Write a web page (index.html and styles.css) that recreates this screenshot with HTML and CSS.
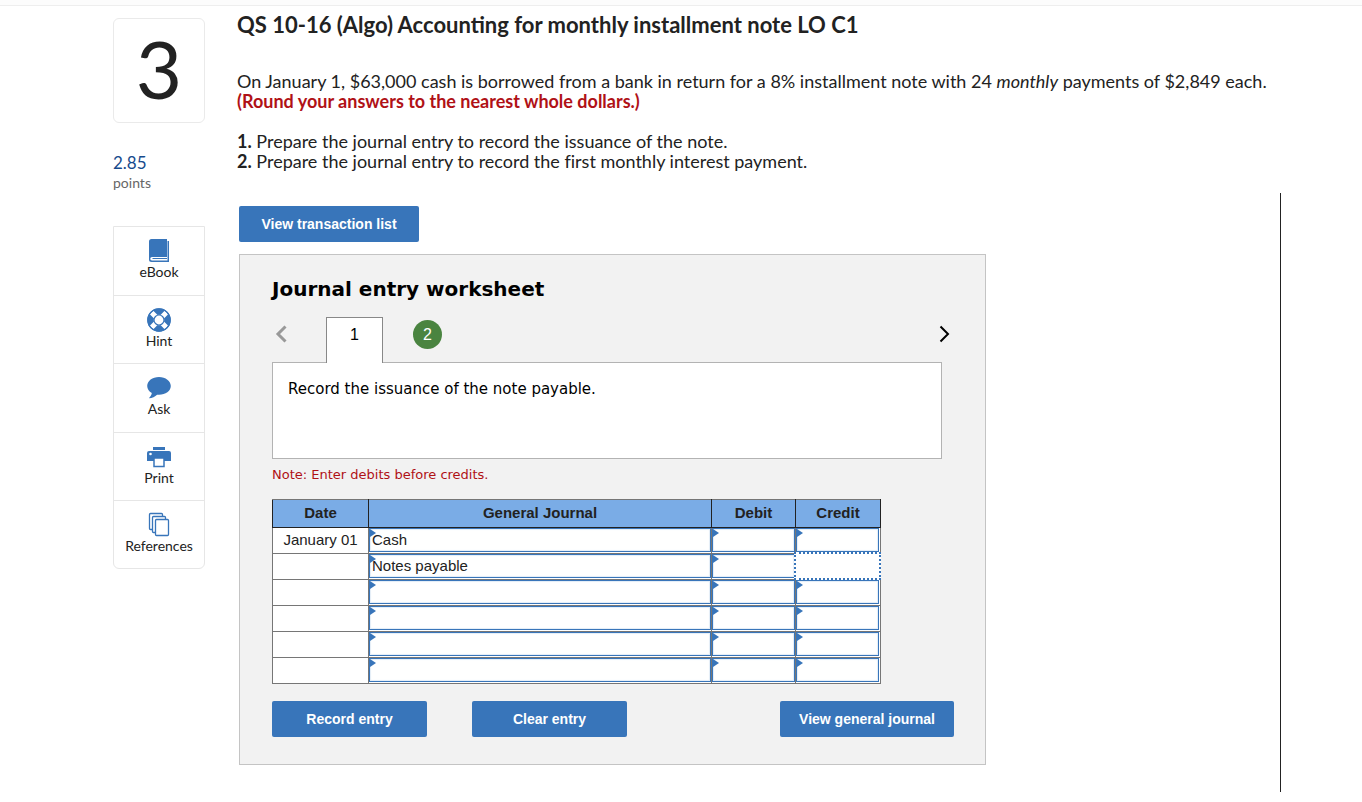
FILE: index.html
```html
<!DOCTYPE html>
<html lang="en">
<head>
  <meta charset="UTF-8" />
  <title>QS 10-16 (Algo) Accounting for monthly installment note</title>
  <link rel="stylesheet" href="styles.css">
</head>
<body>
  <div class="topbar"></div>
  <div class="page">
    <aside class="sidebar">
      <div class="question-number">3</div>
      <div class="points"><span class="points-value">2.85</span>points</div>
      <nav class="tools">
        <a href="#" class="tool">
          <svg width="24" height="26" viewBox="0 0 24 26">
            <path fill="#3875ba" d="M4.500 1H20v18H5a1.500 1.500 0 0 0 0 3.500h15.500V3H22v21H4.500A2.500 2.500 0 0 1 2 21.500v-18A2.500 2.500 0 0 1 4.500 1z"/>
            <path stroke="#3875ba" d="M5.500 20.500H20"/>
          </svg>
          eBook
        </a>
        <a href="#" class="tool">
          <svg width="24" height="26" viewBox="0 0 24 26">
            <circle cx="12" cy="13" r="8.500" fill="none" stroke="#3875ba" stroke-width="6.500"/>
            <path stroke="#fff" stroke-width="5" d="M4.600 5.600l4.400 4.400M19.400 5.600l-4.400 4.400M4.600 20.400l4.400-4.400M19.400 20.400l-4.400-4.400"/>
            <circle cx="12" cy="13" r="11.200" fill="none" stroke="#3875ba" stroke-width="1.200"/>
            <circle cx="12" cy="13" r="5" fill="#fff" stroke="#3875ba" stroke-width="1.200"/>
          </svg>
          Hint
        </a>
        <a href="#" class="tool">
          <svg width="24" height="26" viewBox="0 0 24 26">
            <path fill="#3875ba" d="M12 2C5.400 2 .2 5.900 .2 11c0 2.900 1.800 5.400 4.600 7-.3 2-1.300 3.700-3 5.200 3.500-.2 6.300-1.500 8.300-3.500l1.900.1c6.600 0 11.800-3.900 11.800-8.800S18.600 2 12 2z"/>
          </svg>
          Ask
        </a>
        <a href="#" class="tool">
          <svg width="24" height="26" viewBox="0 0 24 26">
            <path fill="#3875ba" d="M6 3h12v3H6zM2 7h20q2 0 2 2v8H0V9q0-2 2-2z"/>
            <circle cx="3.500" cy="10" r="1.300" fill="#fff"/>
            <path fill="#fff" stroke="#3875ba" stroke-width="1.500" d="M7 14h10v8.500H7z"/>
          </svg>
          Print
        </a>
        <a href="#" class="tool">
          <svg width="24" height="26" viewBox="0 0 24 26">
            <g fill="#fff" stroke="#3875ba" stroke-width="1.300">
              <rect x="2.500" y="1.500" width="13" height="16" rx="1"/>
              <rect x="5.500" y="4.500" width="13" height="16" rx="1"/>
              <rect x="8.500" y="7.500" width="13" height="16" rx="1"/>
            </g>
          </svg>
          References
        </a>
      </nav>
    </aside>

    <main class="content">
      <h1>QS 10-16 (Algo) Accounting for monthly installment note LO C1</h1>
      <div class="question">
        <p>On January 1, $63,000 cash is borrowed from a bank in return for a 8% installment note with 24 <em>monthly</em> payments of $2,849 each. <strong class="round">(Round your answers to the nearest whole dollars.)</strong></p>
        <p><b>1.</b> Prepare the journal entry to record the issuance of the note.<br>
        <b>2.</b> Prepare the journal entry to record the first monthly interest payment.</p>
      </div>

      <div class="answer">
        <button type="button" class="btn btn-list">View transaction list</button>

        <section class="worksheet">
          <h2>Journal entry worksheet</h2>
          <div class="tabs">
            <button type="button" class="arrow prev" aria-label="Previous">
              <svg width="12" height="18" viewBox="0 0 12 18"><path d="M10.500 1.500 3 9l7.500 7.500"/></svg>
            </button>
            <button type="button" class="tab active">1</button>
            <button type="button" class="tab"><span class="dot">2</span></button>
            <button type="button" class="arrow next" aria-label="Next">
              <svg width="12" height="18" viewBox="0 0 12 18"><path d="M1.500 1.500 9 9l-7.500 7.500"/></svg>
            </button>
          </div>
          <div class="instruction">Record the issuance of the note payable.</div>
          <p class="note">Note: Enter debits before credits.</p>

          <table class="journal">
            <colgroup><col class="col-date"><col class="col-general"><col class="col-debit"><col class="col-credit"></colgroup>
            <thead>
              <tr><th>Date</th><th>General Journal</th><th>Debit</th><th>Credit</th></tr>
            </thead>
            <tbody>
              <tr>
                <td>January 01</td>
                <td class="entry"><input type="text" value="Cash" aria-label="Account 1"></td>
                <td class="entry"><input type="text" aria-label="Debit 1"></td>
                <td class="entry"><input type="text" aria-label="Credit 1"></td>
              </tr>
              <tr>
                <td></td>
                <td class="entry"><input type="text" value="Notes payable" aria-label="Account 2"></td>
                <td class="entry"><input type="text" aria-label="Debit 2"></td>
                <td class="entry selected"><input type="text" aria-label="Credit 2"></td>
              </tr>
              <tr>
                <td></td>
                <td class="entry"><input type="text" aria-label="Account 3"></td>
                <td class="entry"><input type="text" aria-label="Debit 3"></td>
                <td class="entry"><input type="text" aria-label="Credit 3"></td>
              </tr>
              <tr>
                <td></td>
                <td class="entry"><input type="text" aria-label="Account 4"></td>
                <td class="entry"><input type="text" aria-label="Debit 4"></td>
                <td class="entry"><input type="text" aria-label="Credit 4"></td>
              </tr>
              <tr>
                <td></td>
                <td class="entry"><input type="text" aria-label="Account 5"></td>
                <td class="entry"><input type="text" aria-label="Debit 5"></td>
                <td class="entry"><input type="text" aria-label="Credit 5"></td>
              </tr>
              <tr>
                <td></td>
                <td class="entry"><input type="text" aria-label="Account 6"></td>
                <td class="entry"><input type="text" aria-label="Debit 6"></td>
                <td class="entry"><input type="text" aria-label="Credit 6"></td>
              </tr>
            </tbody>
          </table>

          <div class="actions">
            <button type="button" class="btn">Record entry</button>
            <button type="button" class="btn">Clear entry</button>
            <button type="button" class="btn btn-journal">View general journal</button>
          </div>
        </section>
      </div>
    </main>
  </div>
</body>
</html>
```
FILE: styles.css
```css
* {
  box-sizing: border-box;
}

body {
  margin: 0;
  background: #fff;
  color: #222;
  font-family: Lato, "Open Sans", sans-serif;
  font-size: 18px;
  line-height: 20px;
}

button, input {
  font-family: "Liberation Sans", Arial, sans-serif;
}

.topbar {
  height: 6px;
  background: #fcfcfc;
  border-bottom: 1px solid #eee;
}

.page {
  display: flex;
  gap: 32px;
  padding: 0 81px 10px 113px;
}

/* left column */
.sidebar {
  flex: 0 0 92px;
  padding-top: 12px;
}

.question-number {
  height: 105px;
  border: 1px solid #eaeaea;
  border-radius: 6px;
  font-size: 80px;
  line-height: 98px;
  text-align: center;
}

.points {
  margin: 30px 0 33px;
  font-size: 14px;
  color: #666;
}

.points-value {
  display: block;
  font-size: 17px;
  color: #174a8c;
}

.tools {
  display: grid;
  grid-auto-rows: 1fr;
  height: 343px;
  border: 1px solid #e6e6e6;
  border-radius: 0 0 6px 6px;
}

.tool {
  display: flex;
  flex-direction: column;
  align-items: center;
  padding-top: 11px;
  font-size: 14px;
  line-height: 16px;
  color: #222;
  text-decoration: none;
}

.tool + .tool {
  border-top: 1px solid #e6e6e6;
}

/* question text */
.content {
  flex: 1;
  min-width: 0;
}

h1 {
  margin: 5px 0 32px;
  font-size: 22px;
  font-weight: 700;
  line-height: 28px;
}

.question {
  font-variant-ligatures: none;
}

.question p {
  margin: 0 0 20px;
}

.question p:last-child {
  margin-bottom: 22px;
}

.round {
  display: block;
  color: #b01116;
}

.answer {
  padding: 13px 0 27px 2px;
  border-right: 1px solid #222;
}

.btn {
  width: 155px;
  height: 36px;
  padding: 0;
  border: none;
  border-radius: 2px;
  background: #3875ba;
  color: #fff;
  font-size: 14px;
  font-weight: 700;
  cursor: pointer;
}

.btn-list {
  display: block;
  width: 180px;
  margin-bottom: 12px;
}

/* worksheet */
.worksheet {
  max-width: 747px;
  padding: 20px 31px 27px 32px;
  background: #f2f2f2;
  border: 1px solid #c4c4c4;
  color: #000;
  font-family: Verdana, "DejaVu Sans", sans-serif;
}

h2 {
  margin: 0 0 14px;
  font-size: 20px;
  line-height: 28px;
}

.tabs {
  display: flex;
  height: 45px;
}

.tab {
  width: 57px;
  padding: 0 0 10px;
  border: 1px solid transparent;
  background: none;
  font-size: 16px;
}

.tab.active {
  position: relative;
  height: 46px;
  margin-right: 16px;
  padding-bottom: 12px;
  background: #fff;
  border: 1px solid #888;
  border-bottom: none;
}

.dot {
  display: block;
  width: 29px;
  margin: 0 auto;
  border-radius: 50%;
  background: #4a8440;
  color: #fff;
  line-height: 29px;
}

.arrow {
  width: 18px;
  padding: 0 0 8px;
  border: none;
  background: none;
}

.arrow path {
  fill: none;
  stroke: #000;
  stroke-width: 2;
}

.prev {
  margin-right: 36px;
}

.prev path {
  stroke: #999;
  stroke-width: 3;
}

.next {
  margin-left: auto;
}

.instruction {
  min-height: 97px;
  margin-right: 12px;
  padding: 16px 15px;
  background: #fff;
  border: 1px solid #b3b3b3;
  font-size: 15px;
}

.note {
  margin: 6px 0 14px;
  color: #b01116;
  font-size: 13px;
}

.journal {
  width: 609px;
  table-layout: fixed;
  border-collapse: collapse;
  background: #fff;
  color: #222;
  font-family: "Liberation Sans", Arial, sans-serif;
  font-size: 15px;
}

.col-date { width: 96px; }
.col-general { width: 343px; }
.col-debit { width: 84px; }
.col-credit { width: 85px; }

.journal th {
  height: 28px;
  padding: 0 0 2px;
  background: #7aace6;
  border: 1px solid #222;
  border-top-color: #767676;
}

.journal td {
  height: 26px;
  padding: 0 0 2px;
  border: 1px solid #767676;
  text-align: center;
}

.journal .entry {
  position: relative;
  padding: 0;
  vertical-align: top;
}

.entry input {
  display: block;
  width: 100%;
  height: 24px;
  padding: 0 2px 2px;
  border: 1px solid #3875ba;
  box-shadow: inset 0 0 1px 1px #e3edf7;
  color: #222;
  font-size: 15px;
}

/* blue marker in the corner of each editable cell */
.entry::before {
  content: "";
  position: absolute;
  top: 1px;
  left: 1px;
  border: 4px solid transparent;
  border-left: 6px solid #3875ba;
  border-right: none;
}

.entry:last-child input {
  width: calc(100% - 1px);
}

.selected::before {
  display: none;
}

.entry.selected input {
  position: absolute;
  top: -2px;
  left: -2px;
  width: calc(100% + 3px);
  height: calc(100% + 3px);
  border: 2px dotted #3875ba;
  box-shadow: none;
}

.actions {
  display: flex;
  gap: 45px;
  margin-top: 17px;
}

.btn-journal {
  width: 174px;
  margin-left: auto;
}
```
